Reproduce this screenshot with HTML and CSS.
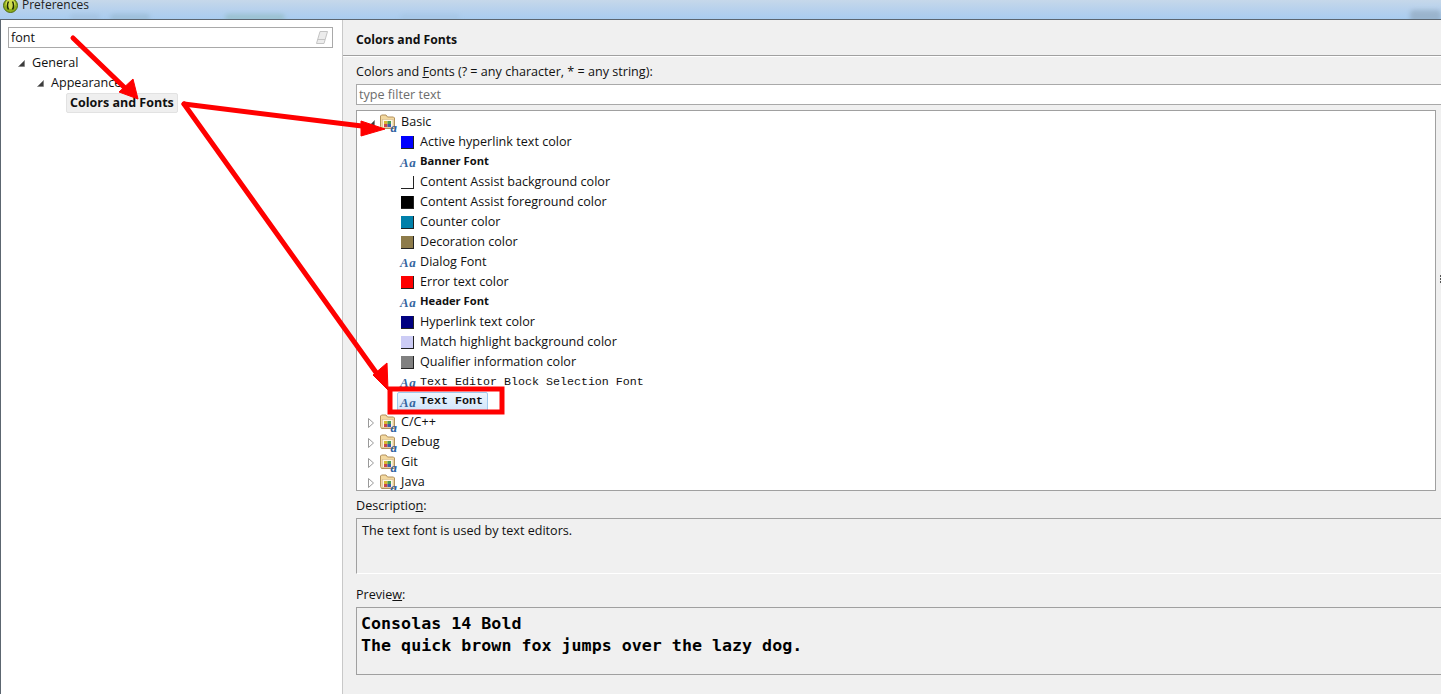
FILE: index.html
```html
<!DOCTYPE html>
<html lang="en">
<head>
<meta charset="utf-8">
<title>Preferences</title>
<link rel="stylesheet" href="styles.css">
</head>
<body>
<svg class="defs" width="0" height="0" aria-hidden="true">
  <symbol id="open" viewBox="0 0 8 8"><path d="M7.5 1.5V7.5H1.5Z" fill="#3c3c3c" stroke="#777" stroke-width=".6"/></symbol>
  <symbol id="closed" viewBox="0 0 8 12"><path d="M1.5 1.5L6.5 6L1.5 10.5Z" fill="#fff" stroke="#9a9a9a" stroke-width="1"/></symbol>
  <symbol id="folder" viewBox="0 0 18 18">
    <path d="M.5 12.5V2L1.5 1H6L7.5 3H13.5L14.5 4V14.5H1.5Z" fill="#f3d9a0" stroke="#b3915c" stroke-width="1"/>
    <rect x="2.5" y="5.5" width="10.5" height="8" fill="#fff7e6" stroke="#d2ba8c" stroke-width=".6"/>
    <rect x="4" y="7" width="3.5" height="3" fill="#d8b830"/><rect x="7.5" y="7" width="3.5" height="3" fill="#4a9c52"/>
    <rect x="4" y="10" width="3.5" height="3" fill="#c84848"/><rect x="7.5" y="10" width="3.5" height="3" fill="#3a60b0"/>
    <text x="10.5" y="17.5" class="fa">a</text>
  </symbol>
</svg>

<header class="titlebar">
  <svg class="appicon" width="15" height="15" viewBox="0 0 15 15" aria-hidden="true">
    <circle cx="7.5" cy="7.5" r="7" fill="#8fae1b" stroke="#4e6a10"/>
    <circle cx="7.5" cy="6" r="5" fill="#cfdc4c"/>
    <path d="M5.5 3.5Q3.4 7.5 5.5 11.5M9.5 3.5Q11.6 7.5 9.5 11.5" fill="none" stroke="#1d2a08" stroke-width="1.5"/>
  </svg>
  <span class="title">Preferences</span>
  <i class="blob b1"></i><i class="blob b2"></i><i class="blob b3"></i><i class="blob b4"></i><i class="blob b5"></i>
</header>

<main class="dialog">
  <aside class="nav">
    <div class="search">
      <span>font</span>
      <svg width="14" height="15" viewBox="0 0 14 15" aria-hidden="true"><path d="M5 1.5H12.5L9 13.5H1.5Z" fill="#ececec" stroke="#c4c4c4"/><path d="M2.5 9.5H10" stroke="#c4c4c4"/></svg>
    </div>
    <div class="navrow lvl0"><svg class="tw" width="8" height="8"><use href="#open"/></svg><span>General</span></div>
    <div class="navrow lvl1"><svg class="tw" width="8" height="8"><use href="#open"/></svg><span>Appearance</span></div>
    <div class="navrow lvl2"><span class="navsel">Colors and Fonts</span></div>
  </aside>

  <section class="page">
    <h1 class="pagehead">Colors and Fonts</h1>
    <div class="body">
      <div class="label lab-filter">Colors and <u>F</u>onts (? = any character, * = any string):</div>
      <div class="filter">type filter text</div>
      <div class="treewrap">
        <div class="tree">
          <div class="row cat"><svg class="tw" width="8" height="8"><use href="#open"/></svg><svg class="fold" width="18" height="18"><use href="#folder"/></svg><span>Basic</span></div>
          <div class="row item"><i class="sw c-blue"></i><span>Active hyperlink text color</span></div>
          <div class="row item"><span class="aa">Aa</span><b>Banner Font</b></div>
          <div class="row item"><i class="sw c-white"></i><span>Content Assist background color</span></div>
          <div class="row item"><i class="sw c-black"></i><span>Content Assist foreground color</span></div>
          <div class="row item"><i class="sw c-teal"></i><span>Counter color</span></div>
          <div class="row item"><i class="sw c-brown"></i><span>Decoration color</span></div>
          <div class="row item"><span class="aa">Aa</span><span>Dialog Font</span></div>
          <div class="row item"><i class="sw c-red"></i><span>Error text color</span></div>
          <div class="row item"><span class="aa">Aa</span><b>Header Font</b></div>
          <div class="row item"><i class="sw c-navy"></i><span>Hyperlink text color</span></div>
          <div class="row item"><i class="sw c-lav"></i><span>Match highlight background color</span></div>
          <div class="row item"><i class="sw c-gray"></i><span>Qualifier information color</span></div>
          <div class="row item"><span class="aa">Aa</span><span class="mono">Text Editor Block Selection Font</span></div>
          <div class="row item"><span class="sel"><span class="aa">Aa</span><span class="mono strong">Text Font</span></span></div>
          <div class="row cat"><svg class="tw tc" width="8" height="12"><use href="#closed"/></svg><svg class="fold" width="18" height="18"><use href="#folder"/></svg><span>C/C++</span></div>
          <div class="row cat"><svg class="tw tc" width="8" height="12"><use href="#closed"/></svg><svg class="fold" width="18" height="18"><use href="#folder"/></svg><span>Debug</span></div>
          <div class="row cat"><svg class="tw tc" width="8" height="12"><use href="#closed"/></svg><svg class="fold" width="18" height="18"><use href="#folder"/></svg><span>Git</span></div>
          <div class="row cat"><svg class="tw tc" width="8" height="12"><use href="#closed"/></svg><svg class="fold" width="18" height="18"><use href="#folder"/></svg><span>Java</span></div>
        </div>
        <div class="sash"><i></i><i></i><i></i></div>
      </div>
      <div class="label lab-desc">Descriptio<u>n</u>:</div>
      <div class="desc">The text font is used by text editors.</div>
      <div class="label lab-prev">Previe<u>w</u>:</div>
      <div class="preview">Consolas 14 Bold<br>The quick brown fox jumps over the lazy dog.</div>
    </div>
  </section>
</main>

<svg class="notes" width="1441" height="694" viewBox="0 0 1441 694" aria-hidden="true">
  <g stroke="#ff0000" fill="#ff0000">
    <line x1="73" y1="38" x2="126" y2="89" stroke-width="5" stroke-linecap="round"/>
    <polygon points="119,92 133,79 138,99" stroke-width="1"/>
    <line x1="184" y1="104" x2="370" y2="127" stroke-width="5" stroke-linecap="round"/>
    <polygon points="361,121 385,129 361,136" stroke-width="1"/>
    <line x1="184" y1="104" x2="380" y2="378" stroke-width="5" stroke-linecap="round"/>
    <polygon points="373,375 387,363 388,390" stroke-width="1"/>
    <rect x="390" y="389" width="112" height="23" fill="none" stroke-width="5"/>
  </g>
</svg>
</body>
</html>
```

FILE: styles.css
```css
* { box-sizing: border-box; }
html, body { margin: 0; padding: 0; }
body {
  width: 1441px;
  height: 694px;
  overflow: hidden;
  position: relative;
  font: 12.6px/20px "Open Sans", "Noto Sans", sans-serif;
  color: #111;
  background: #f0f0f0;
}
.defs { position: absolute; }
.fa { font: italic 700 13px "Liberation Serif", serif; fill: #2f5f9f; }

.titlebar {
  height: 19px;
  display: flex;
  align-items: flex-start;
  position: relative;
  overflow: hidden;
  background: linear-gradient(#c6d8ea 0, #b9d2ec 8px, #a9ccf0 19px);
  padding-left: 3px;
}
.appicon { margin-top: -2px; flex: none; }
.title { margin-left: 4px; margin-top: -5px; font-size: 12px; color: #222; }
.blob { position: absolute; top: 14px; height: 7px; border-radius: 4px; filter: blur(2px); background: #93b4c9; opacity: .55; }
.b1 { left: 110px; width: 40px; }
.b2 { left: 225px; width: 60px; background: #8eb8b8; }
.b3 { left: 400px; width: 60px; background: #a4c3e0; }
.b4 { left: 1410px; width: 31px; top: 10px; height: 12px; background: #8a9fb2; }
.b5 { left: 70px; width: 30px; background: #a0bdd8; }

.dialog {
  height: 675px;
  display: flex;
  border-top: 1px solid #5c6670;
  border-left: 1px solid #5c6670;
}
.nav {
  width: 342px;
  flex: none;
  background: #fff;
  border-right: 1px solid #c8c8c8;
  padding: 7px 9px 0 7px;
}
.search {
  height: 21px;
  width: 325px;
  border: 1px solid #a9a9a9;
  display: flex;
  align-items: center;
  justify-content: space-between;
  padding: 0 3px 0 2px;
  margin-bottom: 5px;
  color: #111;
}
.navrow { height: 20px; display: flex; align-items: center; }
.lvl0 { padding-left: 9px; }
.lvl1 { padding-left: 28px; }
.lvl2 { padding-left: 58px; }
.navrow .tw { margin-right: 7px; }
.navsel {
  font-size: 12.5px;
  font-weight: 700;
  background: #efefef;
  border: 1px solid #e2e2e2;
  border-radius: 2px;
  padding: 0 3px;
  height: 20px;
  line-height: 18px;
  white-space: nowrap;
}
.tw { flex: none; }

.page { flex: 1; min-width: 0; background: #f0f0f0; display: flex; flex-direction: column; }
.pagehead {
  margin: 0;
  height: 36px;
  padding: 10px 0 0 13px;
  font-size: 12.2px;
  line-height: 20px;
  font-weight: 700;
  border-bottom: 1px solid #a0a0a0;
  box-shadow: 0 1px 0 #fff;
}
.body { padding-left: 13px; flex: 1; min-height: 0; }
.label { height: 20px; line-height: 20px; }
.lab-filter { margin-top: 6px; }
.filter {
  height: 21px;
  margin-top: 2px;
  border: 1px solid #a9a9a9;
  border-right: 0;
  background: #fff;
  color: #6d6d6d;
  padding-left: 2px;
  line-height: 19px;
}
.treewrap { display: flex; margin-top: 5px; height: 381px; }
.tree {
  width: 1080px;
  flex: none;
  background: #fff;
  border: 1px solid #a0a0a0;
  padding-top: 1px;
  overflow: hidden;
}
.sash { flex: 1; display: flex; flex-direction: column; align-items: flex-end; justify-content: center; gap: 1px; padding-bottom: 43px; }
.sash i { width: 1px; height: 2px; background: #555; }
.row { height: 20px; display: flex; align-items: center; white-space: nowrap; }
.cat { padding-left: 10px; padding-top: 2px; }
.cat .tw { margin-right: 5px; }
.cat .fold { margin-right: 3px; }
.cat span { margin-top: -2px; }
.item { padding-left: 44px; }
.item b { font-size: 11.2px; margin-top: -2px; }
.sw { width: 13px; height: 13px; margin-right: 6px; flex: none; border-right: 1px solid #222; border-bottom: 1px solid #222; }
.c-blue { background: #0000ff; }
.c-white { background: #fff; }
.c-black { background: #000; }
.c-teal { background: #0080aa; }
.c-brown { background: #8d7b4a; }
.c-red { background: #ff0000; }
.c-navy { background: #000080; }
.c-lav { background: #ccccf5; }
.c-gray { background: #808080; }
.aa {
  width: 20px;
  margin-left: -1px;
  flex: none;
  font: italic 700 13px/20px "Liberation Serif", serif;
  color: #35659f;
  letter-spacing: .5px;
  padding-top: 1px;
}
.mono { font: 11.67px/20px "Liberation Mono", monospace; }
.strong { font-weight: 700; margin-top: -2px; }
.sel {
  display: flex;
  align-items: center;
  height: 20px;
  width: 91px;
  margin-left: -4px;
  padding-left: 3px;
  background: linear-gradient(#eef6fe, #cfe4fa);
  border: 1px solid #9fc9ee;
  border-radius: 2px;
}
.lab-desc { margin-top: 5px; }
.desc {
  height: 56px;
  margin-top: 2px;
  padding: 2px 0 0 5px;
  border-top: 1px solid #a0a0a0;
  border-left: 1px solid #a0a0a0;
  border-bottom: 1px solid #fff;
}
.lab-prev { margin-top: 11px; }
.preview {
  height: 68px;
  margin-top: 2px;
  padding: 5px 0 0 4px;
  border: 1px solid #a0a0a0;
  border-right: 0;
  font: 700 16.67px/22px "DejaVu Sans Mono", monospace;
  color: #000;
}
.notes { position: absolute; left: 0; top: 0; pointer-events: none; }
```
